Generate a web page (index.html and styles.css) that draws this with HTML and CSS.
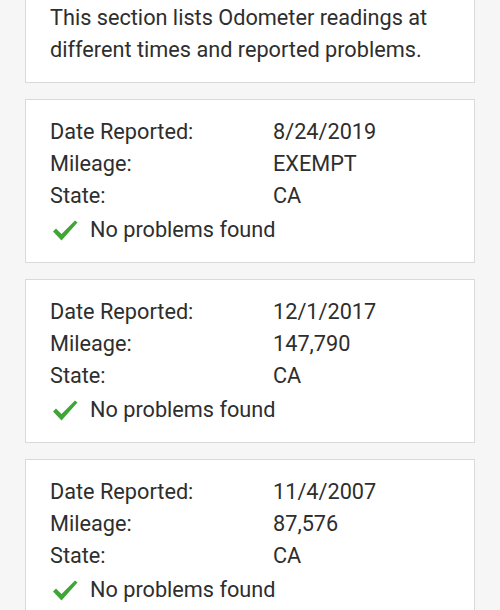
FILE: index.html
```html
<!DOCTYPE html>
<html>
<head>
<meta charset="utf-8">
<link rel="stylesheet" href="styles.css">
</head>
<body>
<div class="list">
  <div class="card intro">
    <p>This section lists Odometer readings at different times and reported problems.</p>
  </div>

  <div class="card">
    <div class="row"><span class="label">Date Reported:</span><span class="value">8/24/2019</span></div>
    <div class="row"><span class="label">Mileage:</span><span class="value">EXEMPT</span></div>
    <div class="row"><span class="label">State:</span><span class="value">CA</span></div>
    <div class="status">
      <svg class="check" viewBox="0 0 26 22" width="26" height="22"><path d="M1 12.5 L4 9.5 L9.5 15 L23 1.5 L25.5 3.5 L9.5 21.5 Z" fill="#3fa535"/></svg>
      <span>No problems found</span>
    </div>
  </div>

  <div class="card">
    <div class="row"><span class="label">Date Reported:</span><span class="value">12/1/2017</span></div>
    <div class="row"><span class="label">Mileage:</span><span class="value">147,790</span></div>
    <div class="row"><span class="label">State:</span><span class="value">CA</span></div>
    <div class="status">
      <svg class="check" viewBox="0 0 26 22" width="26" height="22"><path d="M1 12.5 L4 9.5 L9.5 15 L23 1.5 L25.5 3.5 L9.5 21.5 Z" fill="#3fa535"/></svg>
      <span>No problems found</span>
    </div>
  </div>

  <div class="card">
    <div class="row"><span class="label">Date Reported:</span><span class="value">11/4/2007</span></div>
    <div class="row"><span class="label">Mileage:</span><span class="value">87,576</span></div>
    <div class="row"><span class="label">State:</span><span class="value">CA</span></div>
    <div class="status">
      <svg class="check" viewBox="0 0 26 22" width="26" height="22"><path d="M1 12.5 L4 9.5 L9.5 15 L23 1.5 L25.5 3.5 L9.5 21.5 Z" fill="#3fa535"/></svg>
      <span>No problems found</span>
    </div>
  </div>
</div>
</body>
</html>
```

FILE: styles.css
```css
html, body {
  margin: 0;
  padding: 0;
  background: #f6f6f6;
}
body {
  font-family: Roboto, "Noto Sans", sans-serif;
  font-size: 21.7px;
  line-height: 32px;
  color: #2e2e2e;
  overflow: hidden;
}
.list {
  display: flex;
  flex-direction: column;
  gap: 16px;
  margin: -15px 25px 0 25px;
}
.card {
  background: #fff;
  border: 1px solid #dadada;
  padding: 16px 24px;
}
.intro p {
  margin: 0;
}
.row {
  display: grid;
  grid-template-columns: 223px 1fr;
}
.status {
  display: flex;
  align-items: center;
  margin-top: 2px;
  height: 32px;
}
.check {
  margin-left: 2px;
  margin-right: 12px;
}
```
